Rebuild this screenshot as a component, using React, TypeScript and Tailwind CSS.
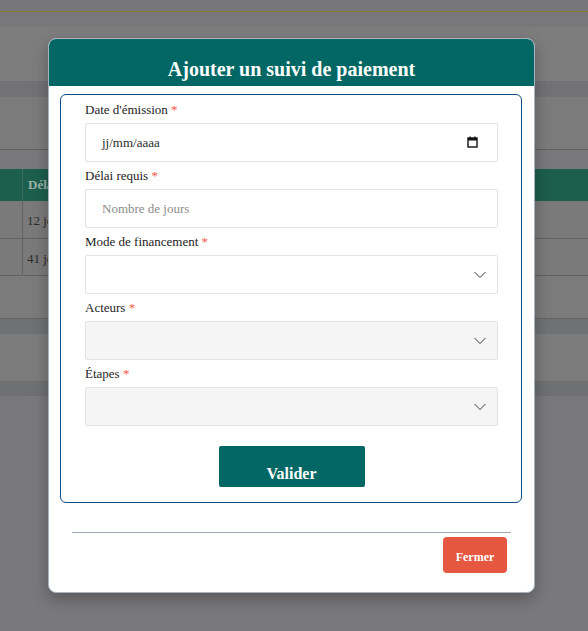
const serif = { fontFamily: '"Liberation Serif", "Times New Roman", serif' }

function Label({ text }: { text: string }) {
  return (
    <label className="block h-[18px] text-[13px] leading-[18px] text-[#1d1d1d]">
      {text} <span className="text-[#ef5a45]">*</span>
    </label>
  )
}

function Chevron() {
  return (
    <svg width="12" height="7" viewBox="0 0 12 7" className="absolute right-[11px] top-1/2 -translate-y-1/2">
      <polyline points="0.5,0.5 6,6 11.5,0.5" fill="none" stroke="#3a3a3a" strokeWidth="1" />
    </svg>
  )
}

function SelectField({ label, muted }: { label: string; muted?: boolean }) {
  return (
    <div>
      <Label text={label} />
      <div
        className={
          'relative mt-1 h-[39px] border border-[#e3e3e3] rounded-[2px] ' +
          (muted ? 'bg-[#f5f5f5]' : 'bg-white')
        }
      >
        <Chevron />
      </div>
    </div>
  )
}

export default function App() {
  return (
    <div className="relative w-[588px] h-[631px] overflow-hidden bg-[#79797b]" style={serif}>
      {/* dimmed page behind the modal */}
      <div className="h-[11px] bg-[#77777a]" />
      <div className="h-px bg-[#867c40]" />
      <div className="h-[15px] bg-[#78787a]" />
      <div className="h-[54px] bg-[#7d7d7e]" />
      <div className="h-[16px] bg-[#727275]" />
      <div className="h-[53px] bg-[#7b7b7c] border-b border-[#5f6267]" />
      <div className="h-[19px] bg-[#79797b]" />
      <div className="flex h-[32px] bg-[#1c5f4c]">
        <div className="w-[23px] border-r border-[#3d6f60]" />
        <div className="pl-[5px] flex items-center text-[13px] font-bold text-[#9fb2aa]">Délai</div>
      </div>
      <div className="flex h-[38px] bg-[#7a7a7a] border-b border-[#5f6266]">
        <div className="w-[23px] border-r border-[#5f6266]" />
        <div className="pl-[4px] pt-[3px] flex items-center text-[13px] text-[#2b2b2b]">12 jours</div>
      </div>
      <div className="flex h-[37px] bg-[#7a7a7a] border-b border-[#5f6266]">
        <div className="w-[23px] border-r border-[#5f6266]" />
        <div className="pl-[4px] pt-[3px] flex items-center text-[13px] text-[#2b2b2b]">41 jours</div>
      </div>
      <div className="h-[43px] bg-[#7b7b7b] border-b border-[#5f6266]" />
      <div className="h-[15px] bg-[#707173]" />
      <div className="h-[47px] bg-[#7c7c7c]" />
      <div className="h-[15px] bg-[#6f7072]" />

      {/* modal */}
      <div className="absolute left-[48px] top-[38px] w-[487px] rounded-[8px] border border-[#a9b2bd] bg-white shadow-[0_6px_16px_rgba(0,0,0,0.28)]">
        <div className="h-[47px] rounded-t-[7px] bg-[#006764] flex items-end justify-center pb-[7px]">
          <h2 className="text-[20px] leading-none font-bold text-white">Ajouter un suivi de paiement</h2>
        </div>

        <div className="ml-[11px] mt-[8px] w-[462px] rounded-[6px] border border-[#0e4d85] pl-6 pr-[23px] pt-[6px] pb-[15px]">
          <div className="flex flex-col gap-[5px]">
            <div>
              <Label text="Date d'émission" />
              <div className="relative mt-1 h-[39px] border border-[#e3e3e3] rounded-[2px] bg-white flex items-center pl-[16px] text-[13px] text-[#2c2c2c]">
                jj/mm/aaaa
                <svg width="11" height="12" viewBox="0 0 11 12" className="absolute right-[19px] top-[12px]">
                  <rect x="1" y="2" width="9" height="9" fill="none" stroke="#111" strokeWidth="1.4" />
                  <rect x="1" y="2" width="9" height="2.5" fill="#111" />
                  <rect x="2.5" y="0.5" width="1.2" height="2" fill="#111" />
                  <rect x="7.3" y="0.5" width="1.2" height="2" fill="#111" />
                </svg>
              </div>
            </div>
            <div>
              <Label text="Délai requis" />
              <input
                type="text"
                placeholder="Nombre de jours"
                className="mt-1 block w-full h-[39px] border border-[#e3e3e3] rounded-[2px] bg-white pl-[16px] text-[13px] text-[#2c2c2c] placeholder-[#8c8c8c] outline-none"
                style={serif}
              />
            </div>
            <SelectField label="Mode de financement" />
            <SelectField label="Acteurs" muted />
            <SelectField label="Étapes" muted />
          </div>

          <div className="mt-[20px] flex justify-center">
            <button
              type="button"
              className="w-[146px] h-[41px] rounded-[2px] bg-[#006764] text-white text-[16px] leading-none font-bold pt-[14px]"
              style={serif}
            >
              Valider
            </button>
          </div>
        </div>

        <div className="px-[23px] pt-[29px] pb-[19px]">
          <div className="h-px bg-[#9ea8b3]" />
          <div className="mt-[4px] flex justify-end pr-[4px]">
            <button
              type="button"
              className="w-[64px] h-[36px] rounded-[4px] bg-[#e5573f] text-white text-[12px] leading-none font-bold pt-[3px]"
              style={serif}
            >
              Fermer
            </button>
          </div>
        </div>
      </div>
    </div>
  )
}
